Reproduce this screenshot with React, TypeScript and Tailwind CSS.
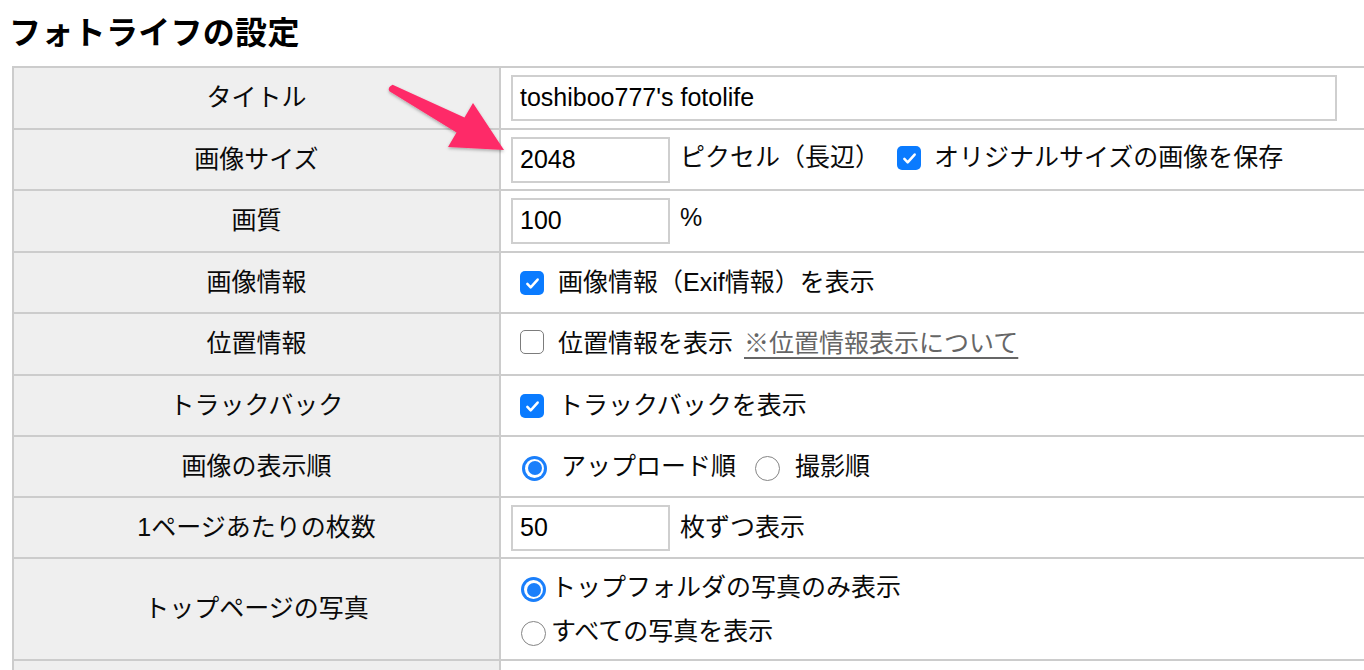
import React from "react";

const FONT = "font-[family-name:'Liberation_Sans','Noto_Sans_CJK_JP',sans-serif]";

function CheckBox({ checked }: { checked: boolean }) {
  if (!checked) {
    return <span className="inline-block w-[24px] h-[24px] shrink-0 rounded-[5px] border-[1.5px] border-[#7c7c7c] bg-white" />;
  }
  return (
    <span className="inline-flex w-[24px] h-[24px] shrink-0 items-center justify-center rounded-[5px] bg-[#0a7bff]">
      <svg viewBox="0 0 24 24" className="w-[19px] h-[19px]" fill="none" stroke="white" strokeWidth="3.2" strokeLinecap="round" strokeLinejoin="round">
        <path d="M5.5 12.5l4.2 4.3L18.5 7" />
      </svg>
    </span>
  );
}

function Radio({ checked }: { checked: boolean }) {
  if (!checked) {
    return <span className="inline-block w-[25px] h-[25px] shrink-0 rounded-full border-[1.5px] border-[#858585] bg-white" />;
  }
  return (
    <span className="inline-block w-[25px] h-[25px] shrink-0 rounded-full bg-[#1a7ffb] p-[3px]">
      <span className="block w-full h-full rounded-full bg-white p-[2.5px]">
        <span className="block w-full h-full rounded-full bg-[#1a7ffb]" />
      </span>
    </span>
  );
}

function TextBox({ value, wide }: { value: string; wide?: boolean }) {
  return (
    <div
      className={
        (wide ? "w-[826px]" : "w-[159px]") +
        " h-[46px] shrink-0 border-2 border-[#cfcfcf] bg-white flex items-center pl-[7px] text-[25px] text-black"
      }
    >
      {value}
    </div>
  );
}

function Row({ label, h, children }: { label: string; h: string; children?: React.ReactNode }) {
  return (
    <div className={"flex border-b-2 border-[#cccccc] " + h}>
      <div className="w-[487px] shrink-0 bg-[#efefef] border-r-2 border-[#cccccc] flex items-center justify-center text-[25px]">
        {label}
      </div>
      <div className="flex-1 bg-white flex items-center pl-[10px] text-[25px]">{children}</div>
    </div>
  );
}

export default function App() {
  return (
    <div className={"relative w-[1364px] h-[670px] overflow-hidden bg-white text-[#0a0a0a] " + FONT}>
      <div className="h-[66px] flex items-center pl-[9px]">
        <h1 className="text-[32px] font-bold text-black tracking-[0.3px]">フォトライフの設定</h1>
      </div>

      <div className="ml-[12px] w-[1400px] border-t-2 border-l-2 border-[#cccccc]">
        <Row label="タイトル" h="h-[62px]">
          <TextBox value="toshiboo777's fotolife" wide />
        </Row>
        <Row label="画像サイズ" h="h-[61px]">
          <TextBox value="2048" />
          <span className="ml-[10px] -mt-[3px]">ピクセル（長辺）</span>
          <span className="ml-[17px]">
            <CheckBox checked />
          </span>
          <span className="ml-[13px] -mt-[3px]">オリジナルサイズの画像を保存</span>
        </Row>
        <Row label="画質" h="h-[62px]">
          <TextBox value="100" />
          <span className="ml-[10px] -mt-[6px]">%</span>
        </Row>
        <Row label="画像情報" h="h-[61px]">
          <span className="ml-[9px] mt-[4px]">
            <CheckBox checked />
          </span>
          <span className="ml-[14px]">画像情報（Exif情報）を表示</span>
        </Row>
        <Row label="位置情報" h="h-[62px]">
          <span className="ml-[9px] mt-[4px]">
            <CheckBox checked={false} />
          </span>
          <span className="ml-[14px]">位置情報を表示</span>
          <a className="ml-[11px] text-[#666] underline underline-offset-[5px]">※位置情報表示について</a>
        </Row>
        <Row label="トラックバック" h="h-[61px]">
          <span className="ml-[9px] mt-[4px]">
            <CheckBox checked />
          </span>
          <span className="ml-[14px]">トラックバックを表示</span>
        </Row>
        <Row label="画像の表示順" h="h-[61px]">
          <span className="ml-[11px] mt-[12px]">
            <Radio checked />
          </span>
          <span className="ml-[14px]">アップロード順</span>
          <span className="ml-[19px] mt-[12px]">
            <Radio checked={false} />
          </span>
          <span className="ml-[15px]">撮影順</span>
        </Row>
        <Row label="1ページあたりの枚数" h="h-[61px]">
          <TextBox value="50" />
          <span className="ml-[10px]">枚ずつ表示</span>
        </Row>
        <Row label="トップページの写真" h="h-[102px]">
          <div className="flex flex-col ml-[10px] mt-[2px]">
            <div className="flex items-center h-[44px]">
              <span className="mt-[12px]">
                <Radio checked />
              </span>
              <span className="ml-[5px]">トップフォルダの写真のみ表示</span>
            </div>
            <div className="flex items-center h-[44px]">
              <span className="mt-[12px]">
                <Radio checked={false} />
              </span>
              <span className="ml-[5px]">すべての写真を表示</span>
            </div>
          </div>
        </Row>
        <Row label="" h="h-[62px]" />
      </div>

      <svg className="absolute left-0 top-0 w-[1364px] h-[670px] pointer-events-none" viewBox="0 0 1364 670">
        <defs>
          <filter id="arrowShadow" x="-20%" y="-20%" width="140%" height="140%">
            <feDropShadow dx="0" dy="1.5" stdDeviation="1.5" floodColor="#000" floodOpacity="0.3" />
          </filter>
        </defs>
        <path
          d="M392.6 84.8 L464.5 117.5 L473 103 L504 150 L448 147 L456.5 132.5 L389.4 91.2 Q387 87.8 392.6 84.8 Z"
          fill="#fe2c68"
          filter="url(#arrowShadow)"
        />
      </svg>
    </div>
  );
}
